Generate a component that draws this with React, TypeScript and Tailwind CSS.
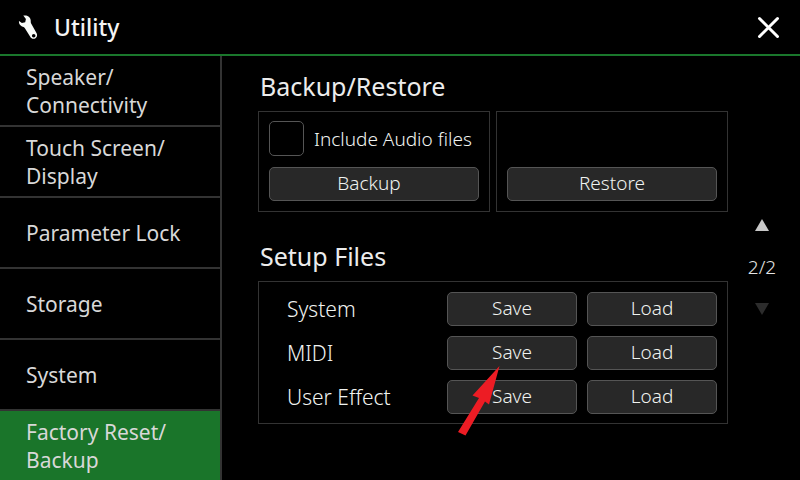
const categories = [
  "Speaker/\nConnectivity",
  "Touch Screen/\nDisplay",
  "Parameter Lock",
  "Storage",
  "System",
  "Factory Reset/\nBackup",
];

const setupFiles = ["System", "MIDI", "User Effect"];

function ActionButton({ label, className = "", describedBy }: { label: string; className?: string; describedBy?: string }) {
  return (
    <button
      type="button"
      aria-describedby={describedBy}
      className={`h-[34px] rounded-[5px] border border-[#555555] bg-[#282828] pb-0.5 text-center text-[19px] leading-7 font-light text-[#f0f3f0] ${className}`}
    >
      {label}
    </button>
  );
}

function Header() {
  return (
    <header className="flex h-14 items-center justify-between border-b-2 border-[#1a772c] pr-5 pl-[18px]">
      <div className="flex items-center gap-4">
        <svg className="h-6 w-5" viewBox="0 0 20 24" aria-hidden="true">
          <path
            fillRule="evenodd"
            fill="#f8fbf8"
            d="M5.300.6C8.800-.3 12.400 1.800 12.700 5.200C12.800 6.400 12.600 7.400 13 8.200L18.600 18.300C19.800 20.800 18.600 22.900 16.500 23.700C14.600 24.200 13.200 23.300 12.200 21.700L6.900 13.200C6.200 12 5.100 12.100 4 11.500C1.800 10.400.6 8.300 1 6L3.900 8.100L7.200 7.300L7.900 4.100ZM15.700 18.900A1.800 1.800 0 1 0 15.700 22.500A1.800 1.800 0 1 0 15.700 18.900Z"
          />
        </svg>
        <h1 className="text-[23px] leading-7 font-medium text-[#f4f4f4]">Utility</h1>
      </div>
      <button type="button" aria-label="Close">
        <svg className="size-6" viewBox="0 0 24 24" aria-hidden="true">
          <path d="M3.500 3.500L21.500 21.500M21.500 3.500L3.500 21.500" stroke="#ffffff" strokeWidth="3" strokeLinecap="round" />
        </svg>
      </button>
    </header>
  );
}

function Sidebar() {
  return (
    <nav className="w-[222px] shrink-0 border-r-2 border-[#333333]">
      <ul className="divide-y-2 divide-[#333333]">
        {categories.map((name, index) => (
          <li key={name} className={index < categories.length - 1 ? "h-[71px]" : "h-[69px]"}>
            <button
              type="button"
              aria-current={index === categories.length - 1 ? "page" : undefined}
              className={`flex h-full w-full items-center pl-[26px] text-left text-[21px] leading-7 whitespace-pre-line text-[#d8d8d8] ${
                index === categories.length - 1 ? "bg-[#1a752a]" : ""
              }`}
            >
              {name}
            </button>
          </li>
        ))}
      </ul>
    </nav>
  );
}

function Pager() {
  return (
    <div className="flex w-[68px] shrink-0 flex-col items-center gap-7 pt-[163px]">
      <button type="button" aria-label="Previous page">
        <svg className="h-3 w-3.5" viewBox="0 0 14 12" aria-hidden="true">
          <path d="M7 0L14 12H0Z" fill="#c8c8c8" />
        </svg>
      </button>
      <span className="text-[19px] leading-4 font-light text-[#e4e4e4]">2/2</span>
      <button type="button" aria-label="Next page" disabled>
        <svg className="h-3 w-3.5" viewBox="0 0 14 12" aria-hidden="true">
          <path d="M0 0H14L7 12Z" fill="#2c2c2c" />
        </svg>
      </button>
    </div>
  );
}

export default function App() {
  return (
    <div className="min-h-screen bg-black font-['Noto_Sans',sans-serif]">
      <Header />
      <div className="flex">
        <Sidebar />
        <main className="min-w-0 flex-1 pt-3.5 pl-9">
          <section>
            <h2 className="pl-0.5 text-[25px] leading-8 text-[#ececec]">Backup/Restore</h2>
            <div className="mt-[9px] grid grid-cols-2 gap-1.5">
              <div className="flex h-[101px] flex-col justify-between border border-[#333333] px-2.5 pt-[9px] pb-2.5">
                <label className="flex items-center gap-2.5 text-[19px] leading-7 font-light text-[#f0f3f0]">
                  <input
                    type="checkbox"
                    className="size-[35px] shrink-0 appearance-none rounded-[5px] border border-[#555555] bg-black checked:bg-[#1a772c]"
                  />
                  Include Audio files
                </label>
                <ActionButton label="Backup" className="pr-2.5" />
              </div>
              <div className="flex h-[101px] flex-col justify-end border border-[#333333] px-2.5 pb-2.5">
                <ActionButton label="Restore" />
              </div>
            </div>
          </section>
          <section className="mt-7">
            <h2 className="pl-0.5 text-[25px] leading-8 text-[#ececec]">Setup Files</h2>
            <div className="relative mt-[9px] flex flex-col gap-2.5 border border-[#333333] pt-2.5 pr-2.5 pb-[9px] pl-7">
              {setupFiles.map((name, index) => (
                <div key={name} className="flex items-center gap-2.5">
                  <span id={`setup-${index}`} className="flex-1 text-[21px] leading-8 font-light text-[#f0f3f0]">
                    {name}
                  </span>
                  <ActionButton label="Save" className="w-[130px]" describedBy={`setup-${index}`} />
                  <ActionButton label="Load" className="w-[130px]" describedBy={`setup-${index}`} />
                </div>
              ))}
              <svg
                className="pointer-events-none absolute top-[84px] right-[227px] h-[70px] w-[42px]"
                viewBox="0 0 42 70"
                aria-hidden="true"
              >
                <path d="M41.500 0L14.500 29.500L21 32L0 66L7.500 69.500L27 35.500L31 38.500Z" fill="#ed1c24" />
              </svg>
            </div>
          </section>
        </main>
        <Pager />
        <div className="w-1 shrink-0" />
      </div>
    </div>
  );
}
